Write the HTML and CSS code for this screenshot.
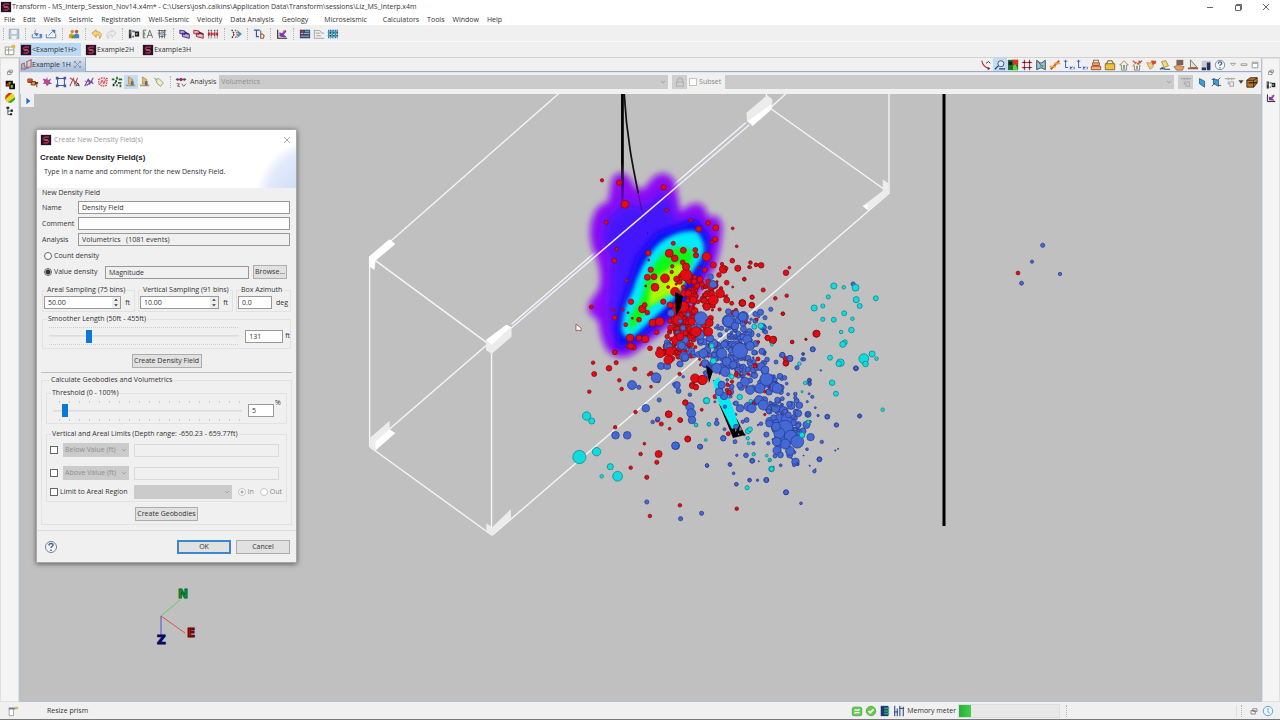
FILE: index.html
```html
<!DOCTYPE html>
<html lang="en">
<head>
<meta charset="utf-8">
<title>Transform - MS_Interp_Session_Nov14.x4m*</title>
<link rel="stylesheet" href="styles.css">
</head>
<body>
<svg class="sprite" aria-hidden="true">
  <symbol id="logo" viewBox="0 0 14 14"><path fill="#241030" d="M1 1h12v12H1z"/><path fill="none" stroke="#b03048" stroke-width="1.6" d="M10.5 3.5H6L4 5l1 2h4l1 2-1.500 1.500H4"/><path stroke="#f08a50" d="M5 7h4"/></symbol>
  <symbol id="save" viewBox="0 0 14 14"><path fill="#b9c6d4" stroke="#8fa2b6" d="M1.500 1.500h11v11h-11z"/><path fill="#eef2f6" d="M4 2h6v5H4zM4 9h6v4H4z"/></symbol>
  <symbol id="import" viewBox="0 0 14 14"><path fill="none" stroke="#4a78b8" d="M1.500 7v4.500h11V7M6 2c-2 1-2 3 0 5"/><path fill="#4a78b8" d="M3 6h6L7 10zM10 7h2v4h-2z"/></symbol>
  <symbol id="export" viewBox="0 0 14 14"><path fill="none" stroke="#4a78b8" d="M1.500 7v4.500h11V7M4 9l5-5"/><path fill="#4a78b8" d="M7 2h5v5z"/></symbol>
  <symbol id="people" viewBox="0 0 14 14"><circle cx="5" cy="4" r="2" fill="#c89040"/><circle cx="10" cy="4" r="2" fill="#c05830"/><path fill="#e89a30" d="M1 12V8l3-2 3 2v4z"/><path fill="#5080b8" d="M7 12V8l3-2 3 2v4z"/><path fill="#4c9a40" d="M4 12V9h4v3z"/></symbol>
  <symbol id="undo" viewBox="0 0 14 14"><path fill="#f4d67c" stroke="#c89420" stroke-width=".9" d="M1 6l5-4v2.500c5-1 8 3 4 8 0-4-1-5-4-4.500V11z"/></symbol>
  <symbol id="redo" viewBox="0 0 14 14"><path fill="#ececec" stroke="#c4c4c4" stroke-width=".9" d="M13 6L8 2v2.500c-5-1-8 3-4 8 0-4 1-5 4-4.500V11z"/></symbol>
  <symbol id="logs" viewBox="0 0 14 14"><path fill="#333" d="M1 2h3v10H1z"/><path fill="#c58b30" d="M2 3h1v4H2z"/><path fill="#3b6fc0" d="M5 3h3v2H5zM5 9h2v2H5z"/><path fill="#222" d="M8 4h5v6H8z"/><path fill="#c9a080" d="M9 6h2v2H9z"/></symbol>
  <symbol id="ea" viewBox="0 0 14 14"><path fill="none" stroke="#5a5f5a" d="M5 2.500H1.500v9H4M2 7h2M6 11.500l3-9 3.500 9M7 8.500h4.500"/><path stroke="#4a9a50" d="M2.500 4v6"/></symbol>
  <symbol id="traces" viewBox="0 0 14 14"><path fill="none" stroke="#555" d="M2 3h10M4 2v10M7 3v9M10 2v10M2 6h4M8 8h4M5 10h4"/><path fill="#5e75c0" d="M8 4h3v2H8zM3 7h2v2H3z"/></symbol>
  <symbol id="cubes" viewBox="0 0 14 14"><path fill="#b8a8e8" stroke="#3a1a70" d="M1 2.500l6 1v4l-6-1zM4 6l8 1v5l-8-2z"/><path fill="#3a1a70" d="M7 4l4 2v2L7 6z"/></symbol>
  <symbol id="cubesr" viewBox="0 0 14 14"><path fill="#f0b8b8" stroke="#a01830" d="M1 2.500l6 1v4l-6-1zM4 6l8 1v5l-8-2z"/><path fill="#402050" d="M7 4l5 2v2L7 6z"/></symbol>
  <symbol id="redgrid" viewBox="0 0 14 14"><path stroke="#333" stroke-width="1.200" stroke-dasharray="2 1" d="M2 2v10M5 2v10M9 2v10M12 2v10"/><path stroke="#d02030" stroke-width="3" stroke-dasharray="2.500 .7" d="M1 7h12"/></symbol>
  <symbol id="shift" viewBox="0 0 14 14"><path fill="none" stroke="#333" stroke-width="1.500" stroke-dasharray="2 1" d="M2 2l3 5-3 5"/><path fill="none" stroke="#d04050" stroke-width="1.500" stroke-dasharray="2 1" d="M6 2l3 5-3 5"/><path fill="#3098a8" d="M8 2l6 5-6 5 2-5z"/></symbol>
  <symbol id="tie" viewBox="0 0 14 14"><path fill="none" stroke="#3058b0" stroke-width="1.300" d="M1 2.500h7M4 2v8h3"/><path fill="none" stroke="#8c6048" stroke-width="1.300" d="M9 3v9h3l1-3-2-2H9"/></symbol>
  <symbol id="xplot" viewBox="0 0 14 14"><path fill="none" stroke="#222" stroke-width="1.300" d="M2 2v10h11"/><path fill="#8038b0" d="M4 5l3 1 4-4 1 2-3 4 3 2-1 1-7-1z"/><path fill="#e06030" d="M8 3h2v2H8z"/></symbol>
  <symbol id="table" viewBox="0 0 14 14"><path fill="#344870" d="M1 2h12v10H1z"/><path fill="#a83040" d="M2 3h4v3H2z"/><path fill="#50a0b8" d="M7 3h5v2H7z"/><path fill="#c8d0d8" d="M2 6h3v1H2zM6 6h6v1H6zM2 9h10v1H2z"/></symbol>
  <symbol id="lines" viewBox="0 0 14 14"><path fill="none" stroke="#90a0a8" d="M1.500 2v10H13M2 3h6l2 3h3"/><path stroke="#c87878" d="M4 9h5"/><path stroke="#70a888" d="M3 6h5"/></symbol>
  <symbol id="seis" viewBox="0 0 14 14"><path stroke="#2878d0" stroke-width="1.500" d="M2 2v10M6 2v10M10 2v10"/><path stroke="#38a0a0" stroke-width="2" d="M1 5h12M1 9h12"/><path stroke="#142c60" stroke-dasharray="2 1" d="M4 2v10M8 2v10M12 2v10"/></symbol>
  <symbol id="persp" viewBox="0 0 14 14"><path fill="#fff" stroke="#8c8f83" d="M1.500 3.500h10v9h-10zM5.500 4v8M2 7h9"/><path fill="#e4b640" d="M9 1h4v4H9z"/></symbol>
  <symbol id="view3d" viewBox="0 0 14 14"><path fill="none" stroke="#b06860" stroke-width="1.300" d="M2 13V6l3-1v4l3 1V3l5-2v8l-4 1-5 3"/><path stroke="#697cac" d="M2 11h8"/></symbol>
  <symbol id="curve" viewBox="0 0 14 14"><path fill="none" stroke="#c02838" stroke-width="1.300" d="M2 2c1 5 4 8 8 9"/><path fill="none" stroke="#222" d="M7 5l3-2 2 2"/><path fill="#722" d="M9 9l3 2-3 2z"/></symbol>
  <symbol id="glass" viewBox="0 0 14 14"><circle cx="8" cy="5.500" r="3.500" fill="#dcecfa" stroke="#2e4668"/><path stroke="#2e4668" stroke-width="1.500" d="M5 8l-4 4M6 11.500h7"/></symbol>
  <symbol id="rgb" viewBox="0 0 14 14"><path fill="#207030" d="M1 1h12v12H1z"/><path fill="#e03020" d="M6 1h7v5L8 8z"/><path fill="#60d040" d="M7 8l3-2 3 7H7z"/><path fill="#101830" d="M2 3h4v4H2z"/></symbol>
  <symbol id="hash" viewBox="0 0 14 14"><path stroke="#c03848" stroke-width="1.200" d="M4 1v12M10 1v12M1 4h12M1 10h12"/><path fill="#402028" d="M3 3h2v2H3zM9 3h2v2H9zM3 9h2v2H3zM9 9h2v2H9z"/></symbol>
  <symbol id="mask" viewBox="0 0 14 14"><path fill="#90c8d8" stroke="#303850" d="M2 1.500l4 3h2l4-3v11l-4-2H6l-4 2z"/><path stroke="#b84060" d="M4 4l5 5"/><path stroke="#38a060" stroke-width="1.500" d="M6 8h4"/></symbol>
  <symbol id="fault" viewBox="0 0 14 14"><path stroke="#e03830" stroke-width="2" d="M2 12L12 2"/><path stroke="#e8a820" stroke-width="2" d="M1 9h7M6 5h7"/></symbol>
  <symbol id="axes" viewBox="0 0 14 14"><path fill="none" stroke="#4868c8" stroke-width="1.200" d="M3 1v9h3M1 2.500h4M8 9l3 3M11 9l-3 3M13 9v3"/></symbol>
  <symbol id="bags" viewBox="0 0 14 14"><path fill="#f0b068" stroke="#a04030" d="M3 4.500h8v3H3zM1.500 8.500h11v4h-11z"/><path fill="none" stroke="#a04030" d="M4 4V1.500h6V4"/></symbol>
  <symbol id="bag" viewBox="0 0 14 14"><path fill="#f0c040" stroke="#806018" d="M1.500 5.500h11v7h-11z"/><path fill="none" stroke="#806018" stroke-width="1.300" d="M3 5l2-3h4l2 3"/></symbol>
  <symbol id="home" viewBox="0 0 14 14"><path fill="#f6eed0" stroke="#8b8067" d="M7 2L2 7h2v6h6V7h2z"/><path fill="#6894b8" d="M6 7h2v5H6z"/></symbol>
  <symbol id="homex" viewBox="0 0 14 14"><path fill="#f6eed0" stroke="#8b8067" d="M6 4L2 8h2v5h6V8h1z"/><path fill="#6894b8" d="M6 8h2v4H6z"/><path stroke="#d04830" stroke-width="1.500" d="M2 2l4 3M7 6l6-4M9 2l2 3"/></symbol>
  <symbol id="hand" viewBox="0 0 14 14"><path fill="#f2c878" stroke="#a88040" stroke-width=".7" d="M2 4l4 1 2-3 3 1-2 7-3 2-2-3z"/><path fill="#d84830" d="M7 2h6v3l-4 2z"/></symbol>
  <symbol id="poly" viewBox="0 0 14 14"><path fill="#f2dc70" stroke="#98895c" d="M3 3l5-1 3 6-5 2z"/><path stroke="#556b84" stroke-width="1.500" d="M1 12l3-2 3 2h6"/></symbol>
  <symbol id="stack" viewBox="0 0 14 14"><path fill="#806058" d="M4 1h8v6H4z"/><path fill="#e8a058" stroke="#705040" stroke-width=".7" d="M1 9l5-2 7 2-2 4H4z"/></symbol>
  <symbol id="pyr" viewBox="0 0 14 14"><path fill="#e8e2d0" stroke="#6f6b60" d="M4 1l8 9H4z"/><path stroke="#98603a" stroke-width="2" d="M1 11h12"/></symbol>
  <symbol id="bars" viewBox="0 0 14 14"><path fill="#c6cad0" d="M2 2h11v10H2z"/><path fill="#28305c" d="M2 10h5v3H2zM8 4h4v9H8z"/></symbol>
  <symbol id="help" viewBox="0 0 14 14"><circle cx="7" cy="7" r="5.500" fill="#f4f7fb" stroke="#6f8296"/><path fill="none" stroke="#4d6490" stroke-width="1.500" d="M5 5.500c0-3 4-2.500 4-.5 0 1.500-2 1.500-2 3M7 9.500V11"/></symbol>
  <symbol id="boxes" viewBox="0 0 14 14"><path fill="#d8a030" stroke="#702818" d="M1 3.500h5v4H1zM5 6.500h5v4H5z"/><path fill="#702818" d="M9 7h4v2H9zM11 9h1v4h-1z"/><path fill="#d03020" d="M2 5h4v2H2z"/></symbol>
  <symbol id="burst" viewBox="0 0 14 14"><path fill="#a040a8" d="M7 1l1 4 4-2-2 4 3 2-4 .5L7 12l-1.500-3L2 9l2-2-2-4 4 1z"/><circle cx="7" cy="7" r="2.500" fill="#c84880"/></symbol>
  <symbol id="box" viewBox="0 0 14 14"><path fill="none" stroke="#4058b0" stroke-width="1.200" d="M3 3h8v8H3z"/><path fill="#4058b0" d="M1 1h3v3H1zM10 1h3v3h-3zM1 10h3v3H1zM10 10h3v3h-3z"/></symbol>
  <symbol id="zig" viewBox="0 0 14 14"><path fill="none" stroke="#b04858" stroke-width="1.200" d="M1 12l4-9 2 7 3-8M1 2l11 8"/><path fill="none" stroke="#404040" d="M8 12l2-4 2 4M9 11h3"/></symbol>
  <symbol id="zig2" viewBox="0 0 14 14"><path fill="none" stroke="#5a50b8" stroke-width="1.300" d="M2 12l4-8 2 5 4-7M4 11l7-5M6 4l6 5"/><path stroke="#d85060" d="M2 6l7 1"/></symbol>
  <symbol id="lasso" viewBox="0 0 14 14"><path fill="#f8d8dc" stroke="#d03048" stroke-width="1.200" stroke-dasharray="2 1" d="M2 4l4-2 6 1-1 8-5 1-4-3z"/><path fill="none" stroke="#d03048" d="M4 9l2-4 2 4 2-5"/></symbol>
  <symbol id="dots" viewBox="0 0 14 14"><path fill="#306838" d="M1 3h3v2H1zM6 1h2v3H6zM9 3h4v2H9zM4 7h2v2H4zM8 7h4v2H8zM6 10h2v2H6zM10 10h2v3h-2z"/><path fill="#222" d="M5 5h2v2H5zM2 9h2v3H2z"/></symbol>
  <symbol id="lamp" viewBox="0 0 14 14"><path fill="#e8b868" stroke="#9b7943" stroke-width=".7" d="M4 1l5 3v5H4z"/><path fill="#b0a070" d="M1 10h11v2H1z"/><path fill="#5c6e78" d="M7 6h3v5H7z"/></symbol>
  <symbol id="tag" viewBox="0 0 14 14"><path fill="#eeeec4" stroke="#8f987e" d="M3 4l4-1 5 5-3 4-4-3z"/><path stroke="#8aa0a8" d="M1 2l4 3"/></symbol>
  <symbol id="analysis" viewBox="0 0 14 14"><path stroke="#333" d="M1 4h12"/><circle cx="7" cy="4" r="2" fill="#d02030"/><circle cx="3" cy="4" r="1.500" fill="#3050b0"/><circle cx="11" cy="4" r="1.500" fill="#3050b0"/><path fill="none" stroke="#555" d="M2 9h3l-2 3h3M8 9l2 3 3-3"/></symbol>
  <symbol id="slab" viewBox="0 0 14 14"><path fill="#38a0d8" stroke="#244c70" stroke-width=".8" d="M4 3l6 3v7L4 9z"/></symbol>
  <symbol id="slabs" viewBox="0 0 14 14"><path fill="#38a0d8" stroke="#244c70" stroke-width=".8" d="M4 3l6 2v7L4 9z"/><path stroke="#304860" d="M2 12l4-4M9 5l3-3M2 4h3M9 11h4"/></symbol>
  <symbol id="tool" viewBox="0 0 14 14"><path fill="none" stroke="#aaa" stroke-width="1.300" d="M1 3h12M5 2v3M9 2v3M5 7v2h2v3h4V7z"/></symbol>
  <symbol id="cube" viewBox="0 0 14 14"><path fill="#b87830" stroke="#38200c" d="M1 5l4-3h8v6l-4 5H1zM1 5h8v8M9 5l4-3"/><path stroke="#38200c" stroke-width="1.500" d="M3 8h10"/></symbol>
  <symbol id="restore" viewBox="0 0 14 14"><path fill="#fff" stroke="#777" d="M5.500 4.500h5v3h-5zM3.500 6.500h5v4h-5z"/></symbol>
  <symbol id="cells" viewBox="0 0 14 14"><path fill="#101010" d="M1 1h10v4h3v8H6V9H1z"/><path fill="#c83020" d="M2 5h5v3H2z"/><path fill="#70c030" d="M8 7h3v4H8z"/><path fill="#e0a820" d="M5 3h3v2H5z"/></symbol>
  <symbol id="ball" viewBox="0 0 14 14"><circle cx="7" cy="7" r="7" fill="#e8d820"/><path fill="#d83028" d="M1 4l4-4h5L0 9z"/><path fill="#28a840" d="M14 6v3l-6 5-4-1z"/></symbol>
  <symbol id="tree" viewBox="0 0 14 14"><path fill="none" stroke="#222" d="M4 2v10h4M4 7h7"/><path fill="#222" d="M2 1h4v3H2zM8 5h3v3H8zM7 10h3v3H7z"/></symbol>
  <symbol id="refresh" viewBox="0 0 14 14"><rect x="1.500" y="2.500" width="11" height="10" rx="2" fill="#68c858" stroke="#48a848"/><path fill="none" stroke="#fff" stroke-width="1.500" d="M4 6h5l1-1M10 9H5l-1 1"/></symbol>
  <symbol id="ok" viewBox="0 0 14 14"><circle cx="7" cy="7" r="5.500" fill="#68c848" stroke="#48a838"/><path fill="none" stroke="#fff" stroke-width="2" d="M4 7l2 2 4-4"/></symbol>
  <symbol id="db" viewBox="0 0 14 14"><path fill="#183878" d="M2 1h9v12H2z"/><path fill="#38a068" d="M6 3h6v2H6zM6 6h6v2H6zM6 9h6v2H6z"/></symbol>
  <symbol id="sliders" viewBox="0 0 14 14"><path stroke="#405888" stroke-width="1.400" d="M2 1v12M5 4v9M8 1v12M12 2v11M1 8h5M7 4h6"/></symbol>
  <symbol id="clock" viewBox="0 0 14 14"><circle cx="7" cy="7" r="5.500" fill="#edf6fc" stroke="#4898c8"/><path fill="none" stroke="#4898c8" d="M7 3.500V8l2 1.500"/></symbol>
  <symbol id="job" viewBox="0 0 14 14"><path fill="#fff" stroke="#999" d="M2.500 4.500h5v8h-5z"/><path fill="#707880" d="M2 3h8v2H2z"/><path fill="#d8c040" d="M10 2h3v3h-3z"/></symbol>
  <symbol id="lock" viewBox="0 0 14 14"><path fill="none" stroke="#b0b0b0" stroke-width="1.300" d="M4 7V4l3-2 3 2v3M3 7h8v5H3z"/></symbol>
  <symbol id="chev" viewBox="0 0 8 8"><path fill="none" stroke="currentColor" d="M2 3l2 2 2-2"/></symbol>
  <symbol id="drop" viewBox="0 0 14 14"><path fill="#444" d="M4 5h6l-3 4z"/></symbol>
</svg>

<header class="titlebar">
  <svg class="ic"><use href="#logo"/></svg>
  <h1>Transform - MS_Interp_Session_Nov14.x4m* - C:\Users\josh.calkins\Application Data\Transform\sessions\Liz_MS_Interp.x4m</h1>
  <div class="winbtns">
    <button aria-label="Minimize"><svg viewBox="0 0 10 10"><path d="M2 5.500h6"/></svg></button>
    <button aria-label="Restore"><svg viewBox="0 0 10 10"><path d="M2.500 3.500h5v5h-5zM3.500 3.500v-1h5v5h-1"/></svg></button>
    <button aria-label="Close"><svg viewBox="0 0 10 10"><path d="M2 2l6 6M8 2L2 8"/></svg></button>
  </div>
</header>
<nav class="menubar">
  <button>File</button><button>Edit</button><button>Wells</button><button>Seismic</button><button>Registration</button><button>Well-Seismic</button><button>Velocity</button><button>Data Analysis</button><button>Geology</button><button class="wide">Microseismic</button><button>Calculators</button><button>Tools</button><button>Window</button><button>Help</button>
</nav>
<div class="toolbar main-tools" id="mainTools"></div>
<div class="perspectives">
  <svg class="ic"><use href="#persp"/></svg>
  <button class="current"><svg class="ic"><use href="#logo"/></svg>&lt;Example1H&gt;</button>
  <button><svg class="ic"><use href="#logo"/></svg>Example2H</button>
  <button><svg class="ic"><use href="#logo"/></svg>Example3H</button>
</div>

<div class="workbench">
  <aside class="rail" id="leftRail"></aside>
  <main class="editor">
    <div class="tabrow">
      <div class="tab"><svg class="ic"><use href="#view3d"/></svg><span>Example 1H</span><button aria-label="Close tab"><svg viewBox="0 0 10 10"><path d="M2 2l6 6M8 2L2 8M1.500 3.500v-2h2M6.500 1.500h2v2M8.500 6.500v2h-2M3.500 8.500h-2v-2"/></svg></button></div>
      <div class="view-tools" id="viewTools"></div>
      <div class="pane-btns">
        <button aria-label="View menu"><svg viewBox="0 0 10 10"><path d="M2 3h6L5 6z"/></svg></button>
        <button aria-label="Minimize pane"><svg viewBox="0 0 10 10"><path d="M1.500 3.500h7v2h-7z"/></svg></button>
        <button aria-label="Maximize pane"><svg viewBox="0 0 10 10"><path d="M1.500 1.500h7v7h-7zM2 3h6"/></svg></button>
      </div>
    </div>
    <div class="toolbar sub-tools">
      <div class="picks" id="pickTools"></div>
      <i class="sep"></i>
      <svg class="ic"><use href="#analysis"/></svg>
      <label class="lab" for="an">Analysis</label>
      <div class="combo grow"><select id="an" disabled><option>Volumetrics</option></select><svg><use href="#chev"/></svg></div>
      <button class="flatbtn" aria-label="Lock" disabled><svg class="ic"><use href="#lock"/></svg></button>
      <label class="check subset"><input type="checkbox" disabled>Subset</label>
      <div class="combo grow"><select aria-label="Subset" disabled><option></option></select><svg><use href="#chev"/></svg></div>
      <button class="flatbtn" aria-label="Edit subset" disabled><svg class="ic"><use href="#tool"/></svg></button>
      <div class="end-tools" id="endTools"></div>
    </div>
    <section class="view">
      <svg class="scene" aria-label="3D view">
        <defs>
          <filter id="b1" x="-20%" y="-20%" width="140%" height="140%"><feGaussianBlur stdDeviation="9"/></filter>
          <filter id="b2" x="-20%" y="-20%" width="140%" height="140%"><feGaussianBlur stdDeviation="16"/></filter>
          <filter id="b3" x="-20%" y="-20%" width="140%" height="140%"><feGaussianBlur stdDeviation="7"/></filter>
          <linearGradient id="fade" x1="0" y1="0" x2="0" y2="1"><stop offset=".6" stop-color="#000"/><stop offset="1" stop-color="#000" stop-opacity="0"/></linearGradient>
        </defs>
        <g transform="translate(-20 -94)">
          <g transform="translate(360 90) scale(.3444 .3333)" fill="none" stroke="#f6f6f6" stroke-width="4">
            <path d="M40 498L580 8M28 500V1070M45 512L368 758M38 1060L368 765M440 703L1120 98M1195 50L1240 8M1195 58L1525 300M1536 8V310L385 1335M30 1072L382 1335V790M1180 8V20"/>
          </g>
          <g transform="translate(560 160) scale(.3333)">
            <path filter="url(#b1)" fill="#9010f4" d="M155 60Q180 15 215 62Q240 112 268 65Q310 15 345 65Q352 100 360 155Q412 110 435 145L445 172Q480 155 487 200Q485 260 465 320L400 430L300 520L215 585Q170 605 138 568Q120 530 116 485L85 455Q80 430 112 395Q130 370 114 305Q75 230 100 165Q115 130 145 125z"/>
            <path filter="url(#b2)" fill="#4418fc" d="M185 110L215 135L265 135L305 90L330 120L345 190L410 175L445 220L430 330L340 470L190 560L155 530L145 460L150 380L155 290L125 240L140 170L175 150z"/>
            <path filter="url(#b1)" fill="#0808f4" d="M290 220L405 178L450 235L440 310L360 440L220 550L172 568L168 500L195 400L230 290z"/>
            <path filter="url(#b3)" fill="#00eafa" d="M300 248Q360 205 412 215Q450 265 418 305L340 420L225 525Q190 545 184 505Q190 440 215 400Q245 300 300 248z"/>
            <path filter="url(#b3)" fill="#10f818" d="M305 285Q350 245 400 275Q400 320 360 370L270 440L215 510Q200 505 215 460Q250 420 255 370Q270 325 305 285z"/>
            <path filter="url(#b3)" fill="#a8fa00" d="M290 350L350 310L385 320L365 380L300 420L265 440L270 390z"/>
            <path filter="url(#b3)" fill="#f4f000" d="M320 375L365 350L360 395L330 400z"/>
          </g>
          <g transform="translate(360 90) scale(.3444 .3333)">
            <path stroke="#f0ecff" stroke-width="4.500" fill="none" d="M435 718L1130 105"/>
            <g fill="#fff"><path d="M26 500L85 448L103 462L45 512L42 540L28 530zM1122 92L1180 42L1197 56L1140 108z"/><path fill="#ececec" d="M1518 268L1534 280V308L1476 362L1460 348L1518 302zM366 750L425 704L440 712V740L382 792L366 780zM1122 68L1182 16L1197 28V56L1140 108L1124 92zM28 1045L86 992V1022L102 1028L45 1082L28 1072zM367 1300L384 1312L438 1258V1286L382 1336L367 1325z"/><path d="M366 750L425 704L438 712L382 764zM1128 92L1192 44L1196 56L1140 106zM45 1055L86 1018L102 1030L45 1080zM1460 348L1474 342V360z"/></g>
            <path fill="url(#fade)" d="M758 8h8v350h-8z"/>
            <path fill="none" stroke="#111" stroke-width="5" d="M767 8C774 140 792 230 808 310"/><path fill="none" stroke="#111" stroke-width="3" stroke-opacity=".5" d="M808 310L818 360M827 392L829 396M835 425v6"/>
          </g>
          <path stroke="#000" stroke-width="3" d="M944 94V526"/>
          <g id="events"></g>
          <path d="M675 292l8 4-2 12-5 8zM706 365l7 6-4 12z"/>
          <path fill="#000" d="M713 380l5 14-2-14zM719 404l14 34 12-3-8-16z"/>
          <path fill="#00ecf0" d="M713 381l6-4 3 10 9 15 8 24-7 3-9-18-6-12z"/>
          <path fill="#888" d="M735 428l2 2-2 2zM740 426l2 4-3 1zM738 433l2 2h-2z"/>
          <g id="eventsFront"></g>
          <path fill="#fff" stroke="#833" stroke-width=".7" d="M576 324v7l2-1 3 1v-3z"/>
          <g fill="none"><path stroke="#50d850" d="M161 616L180 600"/><path stroke="#e05050" d="M161 616L185 633"/><path stroke="#5050e0" d="M161 616V636"/></g>
          <g class="axis"><text x="178" y="598" fill="#10a018" stroke="#063">N</text><text x="187" y="637" fill="#c01018" stroke="#500">E</text><text x="157" y="644" fill="#1010b0" stroke="#004">Z</text></g>
        </g>
      </svg>
      <button class="expand" aria-label="Expand"><svg viewBox="0 0 10 10"><path fill="#2868c8" d="M3 1l5 4-5 4z"/></svg></button>

      <form class="dialog" aria-label="Create New Density Field(s)">
        <div class="dlg-head">
          <div class="dlg-title"><svg class="ic"><use href="#logo"/></svg><span>Create New Density Field(s)</span><button type="button" aria-label="Close"><svg viewBox="0 0 10 10"><path d="M2 2l6 6M8 2L2 8"/></svg></button></div>
          <h2>Create New Density Field(s)</h2>
          <p>Type in a name and comment for the new Density Field.</p>
        </div>
        <fieldset class="plain"><legend>New Density Field</legend>
          <div class="fields">
            <label for="nm">Name</label><input id="nm" type="text" value="Density Field">
            <label for="cm">Comment</label><input id="cm" type="text">
            <label for="al">Analysis</label><input id="al" type="text" readonly value="Volumetrics   (1081 events)">
          </div>
          <div class="row count"><label class="check"><input type="radio" name="d">Count density</label></div>
          <div class="row value"><label class="check"><input type="radio" name="d" checked>Value density</label><input type="text" aria-label="Value" readonly value="Magnitude"><button type="button">Browse...</button></div>
          <div class="sampling">
            <fieldset><legend>Areal Sampling (75 bins)</legend><div class="row"><span class="spin"><input type="text" aria-label="Areal sampling" value="50.00"><svg viewBox="0 0 8 12"><path d="M2 4l2-2 2 2zM2 8l2 2 2-2z"/></svg></span><span>ft</span></div></fieldset>
            <fieldset><legend>Vertical Sampling (91 bins)</legend><div class="row"><span class="spin"><input type="text" aria-label="Vertical sampling" value="10.00"><svg viewBox="0 0 8 12"><path d="M2 4l2-2 2 2zM2 8l2 2 2-2z"/></svg></span><span>ft</span></div></fieldset>
            <fieldset class="az"><legend>Box Azimuth</legend><div class="row"><input type="text" aria-label="Box azimuth" value="0.0"><span>deg</span></div></fieldset>
          </div>
          <fieldset class="smoother"><legend>Smoother Length (50ft - 455ft)</legend>
            <div class="row"><div class="slider fine"><input type="range" aria-label="Smoother length" min="50" max="455" value="131"></div><input class="num" type="text" aria-label="Length" value="131"><span>ft</span></div>
          </fieldset>
          <div class="center"><button type="button">Create Density Field</button></div>
        </fieldset>
        <hr>
        <fieldset class="calc"><legend>Calculate Geobodies and Volumetrics</legend>
          <fieldset class="threshold"><legend>Threshold (0 - 100%)</legend>
            <div class="row"><div class="slider"><input type="range" aria-label="Threshold" min="0" max="100" value="5"></div><input class="num" type="text" aria-label="Percent" value="5"><span class="pct">%</span></div>
          </fieldset>
          <fieldset class="limits"><legend>Vertical and Areal Limits (Depth range: -650.23 - 659.77ft)</legend>
            <div class="row"><input type="checkbox" aria-label="Below"><div class="combo"><select aria-label="Below" disabled><option>Below Value (ft)</option></select><svg><use href="#chev"/></svg></div><input type="text" aria-label="Below value" disabled></div>
            <div class="row"><input type="checkbox" aria-label="Above"><div class="combo"><select aria-label="Above" disabled><option>Above Value (ft)</option></select><svg><use href="#chev"/></svg></div><input type="text" aria-label="Above value" disabled></div>
            <div class="row region"><label class="check"><input type="checkbox">Limit to Areal Region</label><div class="combo"><select aria-label="Region" disabled><option></option></select><svg><use href="#chev"/></svg></div><label class="check off"><input type="radio" name="io" checked disabled>In</label><label class="check off"><input type="radio" name="io" disabled>Out</label></div>
          </fieldset>
          <div class="center"><button type="button">Create Geobodies</button></div>
        </fieldset>
        <div class="dlg-foot"><button type="button" class="helpbtn" aria-label="Help"><svg class="ic"><use href="#help"/></svg></button><button type="button" class="default">OK</button><button type="button">Cancel</button></div>
      </form>
    </section>
  </main>
  <aside class="rail" id="rightRail"></aside>
</div>
<footer class="status">
  <svg class="ic"><use href="#job"/></svg><span class="msg">Resize prism</span>
  <div class="meter-group"><svg class="ic"><use href="#refresh"/></svg><svg class="ic"><use href="#ok"/></svg><svg class="ic"><use href="#db"/></svg><svg class="ic"><use href="#sliders"/></svg><span>Memory meter</span><div class="meter"><i></i></div><i class="sep"></i></div>
  <div class="corner"><i class="sep"></i><svg class="ic"><use href="#restore"/></svg><svg class="ic"><use href="#clock"/></svg></div>
</footer>
<script src="app.js"></script>
</body>
</html>
```
FILE: styles.css
```css
* { box-sizing: border-box; }
body { margin: 0; height: 100vh; display: flex; flex-direction: column; overflow: hidden; background: #f0f0f0; color: #333; font: 7px/10px "Open Sans", "Noto Sans", sans-serif; }
button, input, select { font: inherit; color: inherit; margin: 0; }
button { padding: 0; border: 0; background: none; white-space: nowrap; }
svg { display: block; flex: none; }
.sprite { position: absolute; width: 0; height: 0; }
.ic { width: 12px; height: 12px; }
.sep { flex: none; width: 1px; height: 12px; border-left: 1px dotted #b4b4b4; margin: 0 4px; }

.titlebar { display: flex; align-items: center; height: 14px; background: #fff; }
.titlebar h1 { flex: 1; margin: 0; font-size: 7px; font-weight: 400; white-space: nowrap; }
.winbtns { display: flex; gap: 18px; padding-right: 9px; }
.winbtns svg, .dlg-title button svg { width: 10px; height: 10px; fill: none; stroke: #666; stroke-width: 1; }

.menubar { display: flex; height: 11px; padding-left: 4px; gap: 8px; background: #fff; align-items: center; }
.menubar .wide { margin: 0 8px; }

.toolbar { display: flex; align-items: center; }
.ib { display: flex; align-items: center; justify-content: center; width: 14px; height: 14px; }
.ib.on { background: #c2dcf3; }
.main-tools { height: 17px; padding-top: 1px; border-bottom: 1px solid #fafafa; }
.main-tools .sep:first-child { margin: 0 3px; }
.perspectives { display: flex; align-items: center; height: 15px; padding-left: 4px; gap: 4px; }
.perspectives button { display: flex; align-items: center; height: 13px; padding: 0 4px 0 0; }
.perspectives .current { background: #bcd9f3; }

.workbench { flex: 1; display: flex; min-height: 0; border-top: 1px solid #d2d2d2; }
.rail { width: 18px; display: flex; flex-direction: column; align-items: center; padding-top: 6px; background: #f4f4f4; border: 1px solid #e0e0e0; }
.rail:first-child { width: 19px; }
.rail .ib { height: 13px; }
.rail .ic { width: 10px; height: 10px; }
.editor { flex: 1; min-width: 0; display: flex; flex-direction: column; border: 1px solid #b4c0d4; border-top: 0; }
.tabrow { display: flex; height: 14px; align-items: center; border-bottom: 1px solid #9aa9c6; }
.tab { display: flex; align-items: center; width: 66px; height: 14px; background: linear-gradient(#d6e2f1, #a9bdd8); border-right: 1px solid #9aa9c6; }
.tab span { white-space: nowrap; flex: 1; }
.tab button svg { width: 9px; height: 9px; margin-right: 3px; fill: none; stroke: #8290a4; stroke-width: 1; }
.view-tools { display: flex; width: 248px; margin-left: auto; }
.view-tools .ib { flex: 1; width: auto; height: 13px; }
.pane-btns { display: flex; gap: 3px; padding: 0 2px; }
.pane-btns svg { width: 8px; height: 8px; fill: #fff; stroke: #888; stroke-width: 1; }
.sub-tools { height: 22px; padding-bottom: 4px; border-top: 1px solid #dfe6f0; }
.picks { display: flex; padding-left: 6px; }
.lab { margin: 0 3px; }
.combo { position: relative; display: flex; align-items: center; height: 14px; background: #cbcbcb; color: #8e8e8e; }
.combo select { appearance: none; width: 100%; height: 14px; border: 0; padding: 0 2px; background: none; color: #8e8e8e; opacity: 1; line-height: 14px; }
.combo > svg { position: absolute; right: 1px; width: 8px; height: 8px; color: #a4a4a4; }
.grow { flex: 1; }
.flatbtn { display: flex; align-items: center; justify-content: center; width: 15px; height: 14px; margin: 0 2px 0 4px; background: #cecece; }
.flatbtn + .subset { margin: 0 4px 0 0; }
.check { display: flex; align-items: center; gap: 2px; white-space: nowrap; }
input[type=checkbox], input[type=radio] { appearance: none; flex: none; width: 8px; height: 8px; border: 1px solid #666; background: #fff; }
input[type=radio] { border-radius: 50%; }
input[type=radio]:checked { background: radial-gradient(#333 0 2px, #fff 3px); }
input:disabled[type=checkbox], input:disabled[type=radio] { border-color: #c4c4c4; }
input:disabled[type=radio]:checked { background: radial-gradient(#aaa 0 1px, #fff 2px); }
.subset, .off { color: #888; }
.end-tools { display: flex; padding-right: 2px; }
.end-tools .ib:nth-child(4) { width: 8px; }

.view { position: relative; flex: 1; min-height: 0; overflow: hidden; background: #c0c0c0; }
.scene { position: absolute; inset: 0; width: 100%; height: 100%; }
.axis { font: bold 12px "DejaVu Sans", sans-serif; stroke-width: 1; }
.expand { position: absolute; left: 1px; top: 0; width: 13px; height: 13px; background: #f0f0f0; display: flex; align-items: center; justify-content: center; }
.expand svg { width: 8px; height: 8px; }

.dialog { position: absolute; left: 16px; top: 35px; width: 261px; background: #f0f0f0; border: 1px solid #a8a8a8; box-shadow: 0 1px 5px #0008; color: #333; }
.dlg-head { height: 58px; background: radial-gradient(circle at 280px 70px, #c3d4f4 0, #e2eafa 50px, #fff 62px); }
.dlg-title { display: flex; align-items: center; height: 19px; padding: 0 4px 0 3px; gap: 2px; color: #999; }
.dlg-title span { flex: 1; }
.dlg-title button svg { stroke: #aaa; }
.dlg-head h2 { margin: 0 3px; font: bold 8px/18px "Liberation Sans", sans-serif; color: #222; }
.dlg-head p { margin: 0 7px; }
fieldset { margin: 0; min-width: 0; padding: 0; border: 1px solid #e2e2e2; }
legend { margin-left: 4px; padding: 0 1px; line-height: 10px; white-space: nowrap; }
fieldset.plain { border-color: transparent; padding: 0 4px; }
.plain > legend { margin-left: -1px; }
.fields { display: grid; grid-template-columns: 32px 1fr; gap: 3px 4px; padding: 3px 1px 0 0; align-items: center; }
.dialog input[type=text] { width: 100%; min-width: 0; height: 13px; padding: 0 3px; border: 1px solid #999; background: #fff; line-height: 11px; }
.dialog input[readonly] { background: #f0f0f0; }
.dialog input[type=text]:disabled { background: #f0f0f0; border-color: #dadada; }
.dialog button:not([aria-label]) { border: 1px solid #adadad; background: #e1e1e1; height: 14px; line-height: 12px; padding: 0; }
.row { display: flex; align-items: center; }
.count { margin-top: 4px; height: 12px; padding-left: 2px; }
.value { margin-top: 3px; padding: 0 4px 0 2px; gap: 4px; }
.value .check { width: 57px; flex: none; }
.value input[type=text] { width: auto; flex: 1; }
.value button { width: 34px; }
.sampling { display: grid; grid-template-columns: 93px 95px 1fr; gap: 3px; margin-top: 6px; }
.sampling legend { margin-left: 3px; }
.sampling .row { padding: 1px 4px 2px 1px; gap: 4px; }
.sampling .az .row { padding-right: 2px; }
.spin { flex: 1; display: flex; position: relative; }
.spin svg { position: absolute; right: 1px; top: 1px; width: 8px; height: 11px; background: #eee; fill: #333; }
.smoother { margin-top: 2px; }
.smoother .row { height: 24px; padding: 0 0 0 6px; gap: 2px; }
.slider { flex: 1; height: 20px; display: flex; align-items: center; background: repeating-linear-gradient(90deg, #ccc 0 1px, #0000 1px 10px) 6px 0 / 100% 2px no-repeat, repeating-linear-gradient(90deg, #ccc 0 1px, #0000 1px 10px) 6px 100% / 100% 2px no-repeat; }
.slider.fine { background: repeating-linear-gradient(90deg, #ccc 0 1px, #0000 1px 2px) 0 1px / 100% 1px no-repeat, repeating-linear-gradient(90deg, #ccc 0 1px, #0000 1px 2px) 0 18px / 100% 1px no-repeat; }
input[type=range] { appearance: none; width: 100%; height: 14px; background: linear-gradient(#d8d8d8, #e8e8e8) 0 50% / 100% 2px no-repeat; }
input[type=range]::-webkit-slider-thumb { appearance: none; width: 6px; height: 13px; background: #0a78d7; }
.dialog .smoother .num { width: 38px; margin-left: 4px; }
.center { display: flex; justify-content: center; margin-top: 5px; }
.plain .center button { width: 70px; }
.dialog hr { margin: 3px 4px 2px; border: 0; border-top: 1px solid #c0c0c0; }
.calc { margin: 0 4px; padding: 3px 4px; }
.threshold .row { height: 25px; padding: 0 5px 0 6px; }
.dialog .threshold .num { width: 26px; margin-left: 6px; }
.pct { align-self: flex-start; width: 6px; margin-left: 1px; }
.limits { margin-top: 5px; }
.limits .row { height: 14px; margin: 4px 7px 0 3px; gap: 5px; }
.limits .row + .row { margin-top: 9px; }
.limits .row.region { margin: 5px 4px 2px 3px; gap: 6px; }
.limits .row > .combo { width: 66px; flex: none; }
.limits .region > .combo { width: auto; flex: 1; }
.calc .center { margin-top: 5px; }
.calc .center button { width: 63px; }
.dlg-foot { display: flex; align-items: center; gap: 5px; height: 32px; margin-top: 5px; padding: 0 6px 0 7px; border-top: 1px solid #dcdcdc; }
.dlg-foot button:not([aria-label]) { width: 54px; }
.dlg-foot .default:not([aria-label]) { border: 2px solid #3a87d0; line-height: 10px; }
.helpbtn { margin-right: auto; }
.helpbtn .ic { width: 14px; height: 14px; }

.status { display: flex; align-items: center; height: 18px; padding-left: 7px; border-bottom: 1px solid #777; }
.msg { margin-left: 28px; flex: 1; }
.meter-group { display: flex; align-items: center; gap: 2px; margin-right: 165px; }
.meter { width: 102px; height: 14px; border: 1px solid #dcdcdc; background: #e8e8e8; }
.meter i { display: block; width: 12px; height: 12px; background: linear-gradient(90deg, #28b038, #40d050); }
.corner { display: flex; align-items: center; gap: 2px; padding-right: 6px; border-left: 1px solid #ddd; }
```
FILE: app.js
```js
const icon = (id, on) => `<button class="ib${on ? ' on' : ''}" aria-label="${id}"><svg class="ic"><use href="#${id}"/></svg></button>`;
function bar(target, spec) {
  document.getElementById(target).innerHTML = spec.split(' ').map(s =>
    s === '|' ? '<i class="sep"></i>' : icon(s.replace('*', ''), s.includes('*'))).join('');
}
bar('mainTools', '| save | import export | people | undo redo | logs ea traces | cubes cubesr redgrid | shift | tie | xplot | table lines seis');
bar('viewTools', 'curve glass* rgb hash mask fault axes axes bags bag home homex hand poly stack pyr bars help');
bar('pickTools', 'boxes burst box zig zig2 lasso dots lamp* lamp tag');
bar('endTools', 'slab slabs tool drop cube');
bar('leftRail', 'restore cells ball tree');
bar('rightRail', 'restore logs xplot');

const paint = { r: ['#e40c14', '#7c0810'], b: ['#4468d4', '#26388c'], c: ['#10dce0', '#0b7c84'] };
let seed = 11;
const rnd = () => (seed = (seed * 16807) % 2147483647) / 2147483647;
const gauss = () => rnd() + rnd() + rnd() - 1.5;
const dot = (k, x, y, r) => `<circle cx="${x.toFixed(1)}" cy="${y.toFixed(1)}" r="${Math.max(.6, r - .3).toFixed(1)}" fill="${paint[k][0]}" stroke="${paint[k][1]}" stroke-width=".7"/>`;
// Elliptical cloud: centre, spread along and across the axis, angle in degrees, count, radius range.
function cloud(k, cx, cy, a, b, deg, n, r0, r1) {
  const t = deg * Math.PI / 180;
  let s = '';
  for (let i = 0; i < n; i++) {
    const u = gauss() * a, v = gauss() * b;
    s += dot(k, cx + u * Math.cos(t) - v * Math.sin(t), cy + u * Math.sin(t) + v * Math.cos(t), r0 + rnd() * (r1 - r0));
  }
  return s;
}
function list(k, [ox, oy, fx, fy], text) {
  const n = text.trim().split(/[\s,]+/).map(Number);
  let s = '';
  for (let i = 0; i < n.length; i += 3) s += dot(k, ox + n[i] / fx, oy + n[i + 1] / fy, n[i + 2] / fx);
  return s;
}
const A = [360, 90, 2.904, 3], B = [560, 160, 3, 3], C = [660, 300, 3, 3], P = [0, 0, 1, 1];
let back = '';
back += cloud('r', 684, 322, 34, 16, -72, 120, 1.3, 4);
back += cloud('r', 704, 294, 30, 17, 35, 65, 1.3, 3.6);
back += cloud('r', 682, 346, 20, 16, 0, 45, 1.5, 3.6);
back += list('r', B, '126 61 6,178 68 9,311 82 9,195 133 13,138 187 7,320 151 6,392 181 6,445 189 8,467 203 10,416 207 10,518 205 5,466 238 9,456 247 6,530 259 5,340 250 7,370 271 10,265 279 9,328 280 13,344 295 11,406 270 8,408 286 9,440 290 14,163 302 8,170 267 6,272 329 9,262 352 10,282 350 10,315 355 14,285 382 13,337 319 6,335 336 6,368 307 8,378 345 19,378 320 12,350 357 10,420 358 10,517 302 8,490 328 13,534 325 8,571 307 5,567 321 5,588 315 6,598 315 5,553 358 6,499 325 6,477 345 8,500 368 8,518 381 4,94 441 7,213 425 9,160 450 5,164 473 8,188 449 5,247 447 12,254 435 8,237 479 8,204 458 4,217 475 4,197 494 7,262 458 8,278 488 12,299 485 14,165 577 8,210 533 12,237 534 10,256 537 12,204 559 7,221 562 9,270 565 8,290 517 8,257 378 4,266 300 4,200 362 5,547 429 11,575 435 9,576 411 7,480 400 14,460 420 16,440 440 12,500 420 10,515 430 7,345 395 14,310 425 9,330 435 10,400 420 12,370 440 17,385 400 11,354 480 16,405 515 17,440 515 14,350 540 16,320 560 12,300 580 14,460 315 10,486 312 6,435 330 8');
back += cloud('b', 728, 346, 38, 24, -38, 110, 1.4, 4);
back += cloud('b', 762, 385, 48, 20, 58, 105, 1.3, 3.6);
back += cloud('b', 785, 430, 25, 19, 65, 65, 2, 4.5);
back += cloud('b', 764, 402, 80, 52, 50, 60, .8, 2);
back += cloud('b', 702, 340, 28, 24, 20, 18, 2, 4);
back += cloud('r', 716, 360, 50, 36, 40, 32, 1, 2.5);
back += list('r', A, '677 818 6,680 852 8,723 835 9,744 818 7,798 837 7,753 871 6,760 897 6,666 905 6,740 787 7,786 768 10,845 850 7,838 854 5,845 890 5,928 852 6,866 873 6,965 885 9,975 890 8,993 870 14,945 937 8,800 966 6,896 972 10,864 990 7,875 1002 7,931 991 7,899 1016 5,741 1012 6,952 1047 9,826 1061 5,815 1092 6,867 1092 11,862 1117 7,786 1133 6,833 1162 7,929 1246 6,842 1278 6,1094 1256 6,1237 548 9,1247 533 5,1165 526 9,1134 518 6,1150 524 6,1133 532 5,1116 567 6,1171 600 7,1206 625 6,1239 617 6,1110 639 10,1139 622 7,1138 646 8,1228 671 6,1325 731 11,1183 743 8,1201 748 10,1255 756 6,1295 748 4,1237 820 9,1236 806 8,1121 695 6,1150 826 7,1128 852 5,1097 535 10,1152 688 5');
back += list('b', A, '790 885 14,810 892 7,860 863 15,830 955 12,869 930 7,920 885 11,925 903 8,958 914 6,911 883 5,742 1036 12,776 1036 12,917 1067 12,988 1070 8,1055 1045 8,1008 1127 6,850 996 6,865 987 7,833 1236 7,992 1270 7,931 1286 7,1075 1124 6,1085 1150 5,1093 1183 6,1131 1170 6,1180 1170 8,1237 1207 8,1121 1096 6,1139 1112 8,1334 1108 8,1271 1123 5,1298 1078 5,1383 1005 7,1357 980 8,1451 978 7,1305 871 7,1305 880 6,1264 912 6,1299 935 4,1440 835 8,1432 582 7,1315 778 8,1227 795 8,1248 806 10,1287 792 5,1285 808 6,1269 833 7,1193 658 7,1163 667 10,1148 672 8,1190 713 6,1178 726 7,1177 786 3,1176 683 7,1225 868 5,1265 985 6,1301 973 10,958 950 13,962 970 14,964 990 12,1113 680 16,1071 693 20,1025 583 12,1018 560 9,894 769 12,942 800 15,874 828 11,892 828 11,903 669 11,990 685 20,932 765 13');
back += list('b', P, '1042.7 245.3 2.4,1032 261.7 1.9,1060 274 2,1021.5 283.2 2.3');
back += list('r', P, '1018 273 2.2');
back += list('b', C, '319 238 20,345 262 16,352 265 16,304 200 13,315 210 13,240 150 22,240 152 24,262 118 14,270 138 14,205 64 17,248 50 14,225 78 12,380 358 17,375 385 25,392 410 20,412 425 20,358 400 17,390 453 14,376 432 16,350 425 14,348 380 14,415 340 11,388 312 9,385 345 10,345 468 7,280 430 6,325 430 6,258 466 8,277 483 7,141 496 6,209 493 6,120 440 8,46 437 12,190 415 9,170 370 8,319 540 8,269 541 6,229 553 6,378 577 8,466 323 4,502 350 7,530 375 7,598 348 6,588 205 7,443 343 6,449 252 6,448 241 5,458 148 8,410 302 8,406 293 6,478 478 7,362 496 5,413 493 4,449 497 3,297 300 14,265 320 14,310 315 16,240 325 12,300 265 16,270 270 14,275 325 14,255 245 14,450 365 5,428 162 4,432 178 6,390 175 10,367 165 9,348 186 7,130 160 14,120 105 14,135 190 12,75 172 12,65 137 12,28 140 10,185 160 16,160 130 14,200 185 14,150 115 12,220 195 12');
back += list('r', C, '377 190 9,338 120 12,323 114 9,470 101 11,396 126 6,295 126 5,438 118 4,368 41 6,275 16 9,248 9 10,284 198 7,105 235 14,128 240 15,97 258 9,108 262 9,60 360 8,26 343 11,76 308 9,83 417 10,205 401 7,148 68 13,145 95 14,108 95 16,95 65 12,30 155 14,25 180 14,60 110 13');
back += list('c', A, '1376 588 10,1405 592 6,1439 593 11,1360 621 7,1441 629 10,1498 625 8,1451 648 8,1344 648 7,1319 654 10,1406 670 8,1430 686 6,1376 689 8,1344 688 7,1427 720 9,1397 726 6,1408 757 8,1402 763 10,1365 803 8,1395 818 12,1390 821 9,1463 806 15,1487 792 10,1468 822 9,1500 806 6,1371 878 9,1382 911 8,1518 959 6,1284 1035 9,1145 710 8,1164 707 9,1196 764 5,1276 821 6,1293 879 6,1284 905 4,1299 995 5,658 978 13,673 993 10,637 1101 20,687 1085 13,727 1130 10,748 1159 15,702 1159 6,1006 932 10,976 1005 6,1013 1003 6,1004 1050 5,1124 1193 7,1195 1137 9,1190 1110 6,1144 1092 5');
let front = list('c', C, '203 222 9,215 230 8,239 291 9,160 183 10,155 138 8,140 302 10,264 393 9,270 388 8,263 415 6,266 430 5,281 463 6,147 373 6,272 303 6,320 467 5,328 482 4,335 507 8,426 405 9,445 366 6,108 375 6');
front += list('b', C, '192 288 12,210 275 12,178 275 13,185 255 12,170 205 16,195 215 15,215 260 8,195 320 6,228 310 8,228 380 8,248 365 6,260 360 8,225 425 7');
front += list('r', C, '203 255 6,208 278 8,200 270 6,216 245 6');
document.getElementById('events').innerHTML = back;
document.getElementById('eventsFront').innerHTML = front;
```
